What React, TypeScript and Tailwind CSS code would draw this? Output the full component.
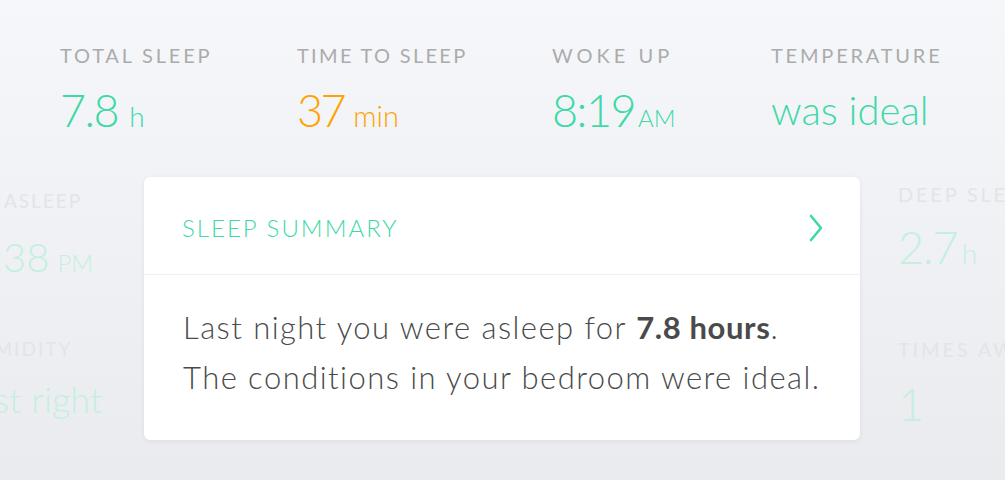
import React from "react";

const teal = "text-[#3fd9a7]";

function Stat({
  label,
  value,
  unit,
  color,
  valueClass,
  unitClass,
  labelClass,
}: {
  label: string;
  value: string;
  unit?: string;
  color: string;
  valueClass?: string;
  unitClass?: string;
  labelClass?: string;
}) {
  return (
    <div className="flex flex-col">
      <div className={`text-[20px] leading-[24px] text-[#ababab] uppercase ${labelClass ?? "tracking-[2.8px]"}`}>{label}</div>
      <div className={`mt-[19px] flex items-baseline ${color}`}>
        <span className={`font-light ${valueClass ?? "text-[45px] leading-[48px] tracking-[-1.5px]"}`}>{value}</span>
        {unit && <span className={`font-light ${unitClass ?? "ml-[11px] text-[28px] leading-[28px]"}`}>{unit}</span>}
      </div>
    </div>
  );
}

export default function App() {
  return (
    <div className="w-[1005px] h-[480px] overflow-hidden bg-gradient-to-b from-[#f6f7fb] to-[#eaebef] font-['Lato',sans-serif]">
      <div className="pt-[43px] pl-[60px] grid grid-cols-[237px_255px_219px_auto]">
        <Stat label="Total Sleep" value="7.8" unit="h" color={teal} />
        <Stat
          label="Time to Sleep"
          labelClass="tracking-[2.3px]"
          value="37"
          unit="min"
          color="text-[#ffa300]"
          valueClass="text-[45px] leading-[48px] tracking-[-2.5px]"
          unitClass="ml-[9px] text-[29px] leading-[28px]"
        />
        <Stat
          label="Woke Up"
          labelClass="tracking-[4px]"
          value="8:19"
          unit="AM"
          color={teal}
          unitClass="ml-[3px] text-[24px] leading-[24px]"
        />
        <Stat label="Temperature" value="was ideal" color={teal} valueClass="text-[40px] leading-[48px]" />
      </div>

      <div className="mt-[43px] flex">
        {/* left faded column */}
        <div className="w-[144px] shrink-0 overflow-hidden">
          <div className="flex flex-col items-start whitespace-nowrap">
            <div className="ml-[-51px] mt-[12px] text-[19px] leading-[24px] tracking-[2px] text-[#e3e4e8] uppercase">Fell Asleep</div>
            <div className="ml-[-53px] mt-[24px] flex items-baseline text-[#c4efe0] font-light">
              <span className="text-[40px] leading-[40px]">11:38</span>
              <span className="ml-[8px] text-[24px] leading-[24px]">PM</span>
            </div>
            <div className="ml-[-38px] mt-[60px] text-[19px] leading-[24px] tracking-[2px] text-[#e3e4e8] uppercase">Humidity</div>
            <div className="ml-[-34px] mt-[20px] text-[36px] leading-[36px] text-[#c4efe0] font-light">just right</div>
          </div>
        </div>

        {/* card */}
        <div className="w-[716px] h-[263px] shrink-0 bg-white rounded-[6px] shadow-[0_1px_4px_rgba(30,40,80,0.08)] flex flex-col">
          <div className="h-[98px] pt-[4px] flex items-center justify-between pl-[38px] pr-[36px] border-b border-[#eef0f3]">
            <div className={`text-[24px] tracking-[2px] uppercase font-light ${teal}`}>Sleep Summary</div>
            <svg width="16" height="28" viewBox="0 0 16 28" fill="none">
              <polyline points="3,2 13,14 3,26" stroke="#3fd9a7" strokeWidth="2.6" strokeLinecap="round" strokeLinejoin="round" />
            </svg>
          </div>
          <div className="pt-[27px] pl-[39px] text-[31px] leading-[50px] tracking-[1.45px] text-[#4a4a4a] font-light">
            <p>
              Last night you were asleep for <span className="font-bold tracking-[0.6px]">7.8 hours</span>.
            </p>
            <p>The conditions in your bedroom were ideal.</p>
          </div>
        </div>

        {/* right faded column */}
        <div className="ml-[38px] flex flex-col whitespace-nowrap">
          <div className="mt-[5px] text-[20px] leading-[24px] tracking-[2.8px] text-[#e3e4e8] uppercase">Deep Sleep</div>
          <div className="mt-[18px] flex items-baseline text-[#c4efe0] font-light">
            <span className="text-[45px] leading-[46px] tracking-[-1px]">2.7</span>
            <span className="ml-[4px] text-[28px] leading-[28px]">h</span>
          </div>
          <div className="mt-[67px] text-[20px] leading-[24px] tracking-[2.8px] text-[#e3e4e8] uppercase">Times Awake</div>
          <div className="mt-[20px] text-[45px] leading-[46px] text-[#c4efe0] font-light">1</div>
        </div>
      </div>
    </div>
  );
}
